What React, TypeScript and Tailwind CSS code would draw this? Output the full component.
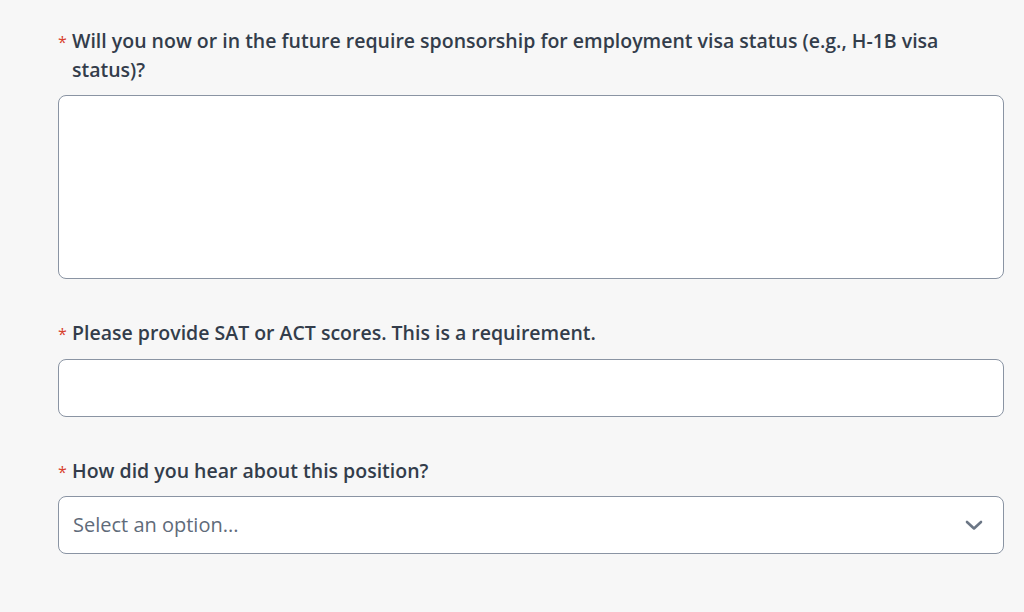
import React from "react";

function Label({ children }: { children: React.ReactNode }) {
  return (
    <div className="flex items-baseline text-[19.5px] leading-[29px] font-semibold text-[#333d4b]">
      <span className="w-[14px] shrink-0 text-[16px] text-[#d7402b] font-normal">*</span>
      <span>{children}</span>
    </div>
  );
}

export default function App() {
  return (
    <div
      className="w-[1024px] h-[612px] bg-[#f7f7f7] pl-[58px] pr-[20px] pt-[26px]"
      style={{ fontFamily: '"Open Sans", "Noto Sans", sans-serif' }}
    >
      <div className="flex flex-col">
        <Label>
          Will you now or in the future require sponsorship for employment visa status (e.g., H-1B visa status)?
        </Label>
        <textarea className="mt-[11px] h-[184px] w-full resize-none rounded-[8px] border-[1.5px] border-[#8a94a3] bg-white outline-none" />

        <div className="mt-[39px]">
          <Label>Please provide SAT or ACT scores. This is a requirement.</Label>
        </div>
        <input className="mt-[10px] h-[58px] w-full rounded-[8px] border-[1.5px] border-[#8a94a3] bg-white outline-none" />

        <div className="mt-[39px]">
          <Label>How did you hear about this position?</Label>
        </div>
        <div className="mt-[9px] flex h-[58px] w-full items-center justify-between rounded-[8px] border-[1.5px] border-[#8a94a3] bg-white pl-[14px] pr-[20px]">
          <span className="text-[20px] text-[#5f6b7a]">Select an option...</span>
          <svg width="18" height="12" viewBox="0 0 18 12" fill="none">
            <path d="M2 3 L9 9.5 L16 3" stroke="#6b7685" strokeWidth="2.6" strokeLinecap="round" strokeLinejoin="round" />
          </svg>
        </div>
      </div>
    </div>
  );
}
